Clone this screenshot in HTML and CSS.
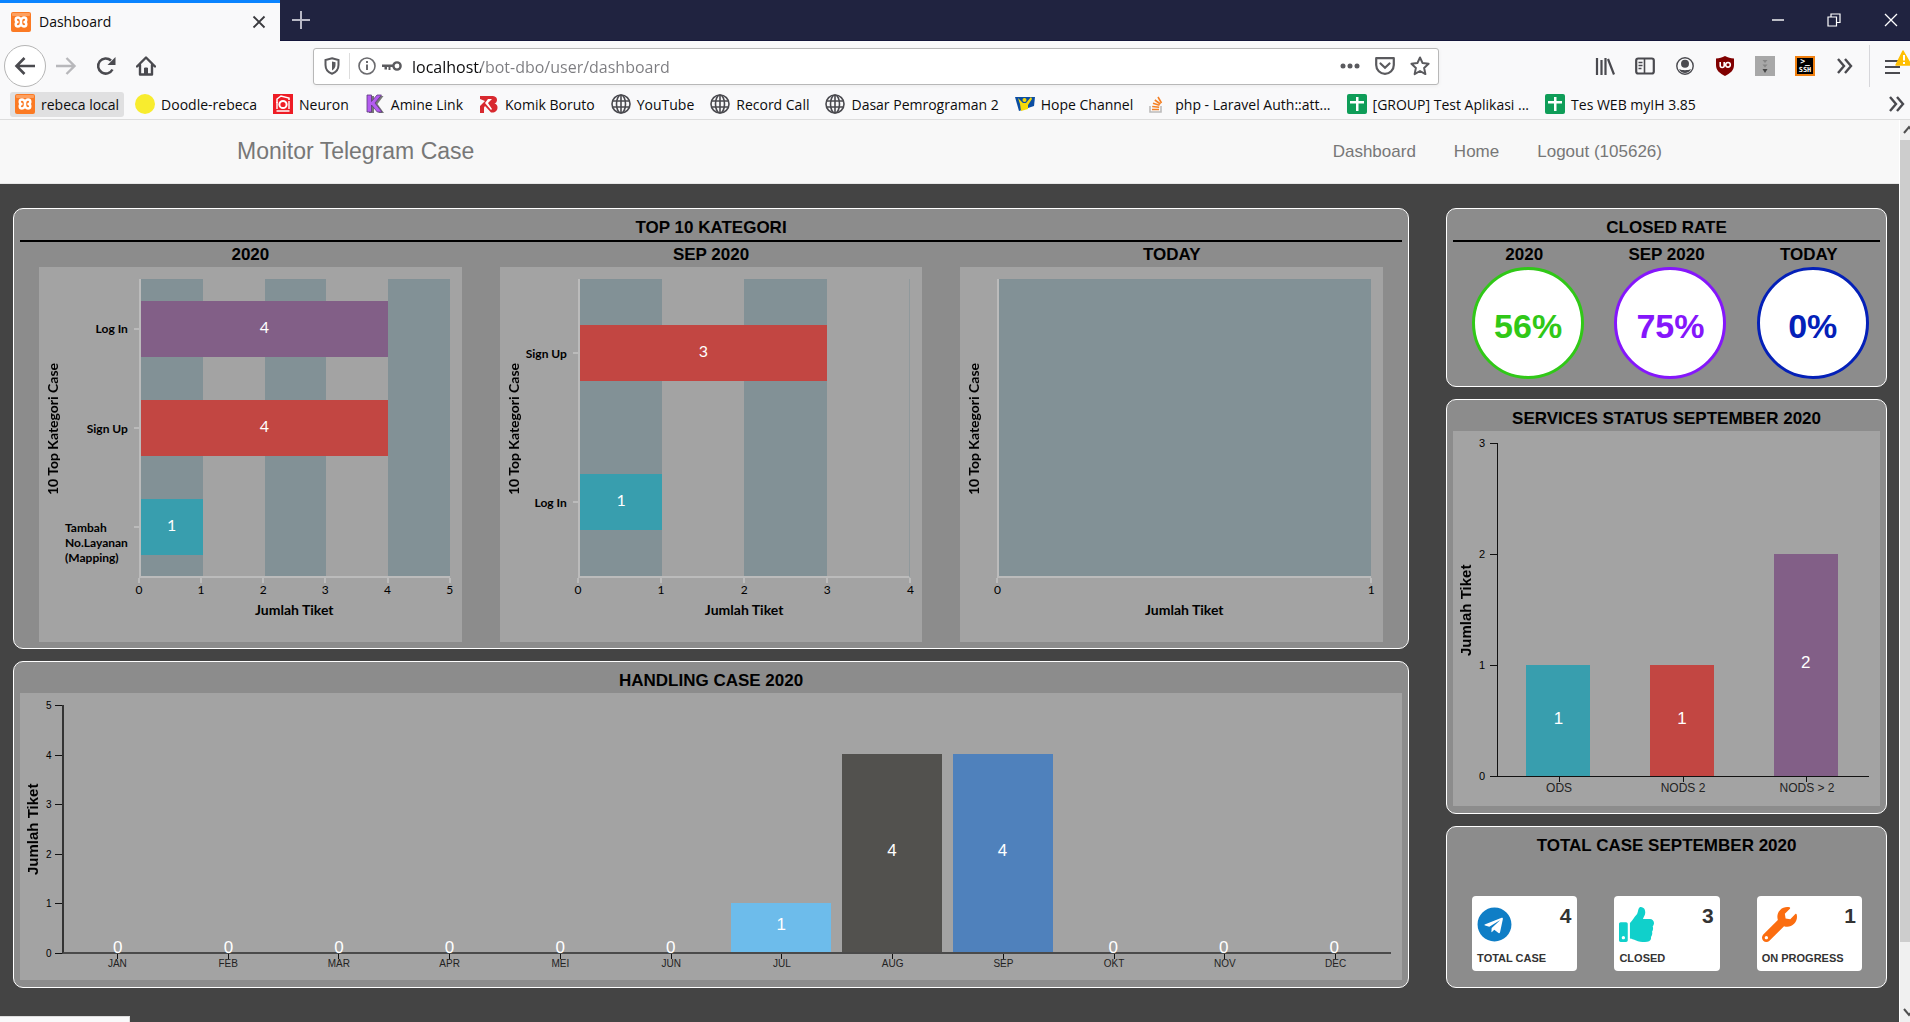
FILE: index.html
```html
<!DOCTYPE html>
<html lang="id">
<head>
<meta charset="utf-8">
<title>Dashboard</title>
<link rel="stylesheet" href="styles.css">
</head>
<body>
<svg class="sprite" aria-hidden="true">
  <symbol id="i-xampp" viewBox="0 0 20 20"><rect width="20" height="20" rx="2" fill="#fb7a24"/><rect x="1" y="1" width="18" height="3" rx="1" fill="#fda060"/><path d="M10 10C10 10 10 5.500 7 5.500S4 9.500 6.500 10C4 10.500 4 14.500 7 14.500S10 10 10 10 10 5.500 13 5.500 16 9.500 13.500 10C16 10.500 16 14.500 13 14.500S10 10 10 10" fill="none" stroke="#fff" stroke-width="2.400" stroke-linejoin="round"/></symbol>
  <symbol id="i-globe" viewBox="0 0 20 20"><g fill="none" stroke="#4a4a4f" stroke-width="1.600"><circle cx="10" cy="10" r="9"/><ellipse cx="10" cy="10" rx="4.500" ry="9"/><path d="M10 1v18M1.500 7h17M1.500 13h17"/></g></symbol>
  <symbol id="i-sheet" viewBox="0 0 20 20"><rect width="20" height="20" rx="2" fill="#0f9d58"/><path d="M9 3h2.500v4H17v2.500h-5.500V17H9V9.500H3V7h6z" fill="#fff"/></symbol>
  <symbol id="i-more" viewBox="0 0 18 18"><path d="M2 2l6 7-6 7M9 2l6 7-6 7" fill="none" stroke="#4a4a4f" stroke-width="2.400"/></symbol>
</svg>

<header class="browser">
  <div class="tabs">
    <div class="tab">
      <svg class="ico"><use href="#i-xampp"/></svg>
      <span class="tab-title">Dashboard</span>
      <button class="btn" aria-label="Close tab"><svg width="14" height="14" viewBox="0 0 14 14"><path d="M1.500 1.500l11 11m0-11l-11 11" stroke="#3a3a3e" stroke-width="1.800"/></svg></button>
    </div>
    <button class="btn new-tab" aria-label="New tab"><svg width="18" height="18" viewBox="0 0 18 18"><path d="M9 0v18M0 9h18" stroke="#b9b9c6" stroke-width="2"/></svg></button>
    <div class="window-buttons">
      <button class="btn" aria-label="Minimize"><svg width="14" height="14" viewBox="0 0 14 14"><path d="M1 7h12" stroke="#fff" stroke-width="1.400"/></svg></button>
      <button class="btn" aria-label="Restore"><svg width="14" height="14" viewBox="0 0 14 14"><path d="M1 4h8.500v9H1zM4 4V1h9v8.500H9.500" fill="none" stroke="#fff" stroke-width="1.200"/></svg></button>
      <button class="btn" aria-label="Close"><svg width="14" height="14" viewBox="0 0 14 14"><path d="M1 1l12 12M13 1L1 13" stroke="#fff" stroke-width="1.300"/></svg></button>
    </div>
  </div>

  <div class="toolbar">
    <div class="nav-buttons">
      <button class="btn back" aria-label="Back"><svg width="22" height="20" viewBox="0 0 22 20"><path d="M21 10H3M10.500 2l-8 8 8 8" fill="none" stroke="#4a4a4f" stroke-width="2.600"/></svg></button>
      <button class="btn" aria-label="Forward"><svg width="22" height="20" viewBox="0 0 22 20"><path d="M1 10h18M11.500 2l8 8-8 8" fill="none" stroke="#b8b8bb" stroke-width="2.400"/></svg></button>
      <button class="btn" aria-label="Reload"><svg width="20" height="20" viewBox="0 0 20 20"><path d="M16.500 13.500A7.600 7.600 0 1 1 15 4.500" fill="none" stroke="#4a4a4f" stroke-width="2.500"/><path d="M19.500 1v8h-8z" fill="#4a4a4f"/></svg></button>
      <button class="btn" aria-label="Home"><svg width="20" height="20" viewBox="0 0 20 20"><path d="M1 10.500L10 1.500l9 9M4 9v9.500h12V9" fill="none" stroke="#4a4a4f" stroke-width="2.400" stroke-linejoin="round" stroke-linecap="round"/><path d="M8.500 18v-6h3v6" fill="#4a4a4f" stroke="#4a4a4f"/></svg></button>
    </div>
    <div class="urlbar">
      <svg width="16" height="18" viewBox="0 0 16 18"><path d="M8 1.200L14.500 3v5c0 4.500-3 7.500-6.500 8.800C4.500 15.500 1.500 12.500 1.500 8V3z" fill="none" stroke="#5a5a5e" stroke-width="2"/><path d="M8 4.500v9c2-1.200 3.500-3 3.500-5.500V5.200z" fill="#5a5a5e"/></svg>
      <span class="url-sep"></span>
      <svg width="18" height="18" viewBox="0 0 18 18"><circle cx="9" cy="9" r="8" fill="none" stroke="#6a6a6e" stroke-width="1.600"/><path d="M9 7.500V13M9 4v2" stroke="#6a6a6e" stroke-width="2"/></svg>
      <svg class="key" width="20" height="10" viewBox="0 0 20 10"><circle cx="15" cy="5" r="3.600" fill="none" stroke="#5a5a5e" stroke-width="2.400"/><path d="M0 3.500h12V6H8.500v3h-2V6H5v2.500H2.500V6H0z" fill="#5a5a5e"/></svg>
      <input class="url" type="text" aria-label="Address" value="localhost/bot-dbo/user/dashboard">
      <button class="btn" aria-label="Page actions"><svg width="20" height="6" viewBox="0 0 20 6"><g fill="#5a5a5e"><circle cx="3" cy="3" r="2.500"/><circle cx="10" cy="3" r="2.500"/><circle cx="17" cy="3" r="2.500"/></g></svg></button>
      <button class="btn" aria-label="Save to Pocket"><svg width="20" height="18" viewBox="0 0 20 18"><path d="M1.200 1.200h17.600V8c0 5-4 8.800-8.800 8.800S1.200 13 1.200 8z" fill="none" stroke="#5a5a5e" stroke-width="2.200" stroke-linejoin="round"/><path d="M5.500 6.500L10 10.700l4.500-4.200" fill="none" stroke="#5a5a5e" stroke-width="2.200" stroke-linecap="round"/></svg></button>
      <button class="btn" aria-label="Bookmark"><svg width="20" height="20" viewBox="0 0 20 20"><path d="M10 1.500l2.600 5.600 6 .7-4.500 4.100 1.300 6.200L10 15l-5.400 3.100 1.300-6.200L1.400 7.800l6-.7z" fill="none" stroke="#5a5a5e" stroke-width="2" stroke-linejoin="round"/></svg></button>
    </div>
    <div class="extensions">
      <button class="btn" aria-label="Library"><svg width="20" height="18" viewBox="0 0 20 18"><path d="M2 1v17M6.500 3v15M10.500 1v17M13 2l6 15.500" stroke="#4a4a4f" stroke-width="2.200" fill="none"/></svg></button>
      <button class="btn" aria-label="Sidebars"><svg width="20" height="18" viewBox="0 0 20 18"><rect x="1.200" y="1.500" width="17.600" height="15" rx="2" fill="none" stroke="#4a4a4f" stroke-width="2.200"/><path d="M9.500 2v14" stroke="#4a4a4f" stroke-width="1.600"/><path d="M3.500 5.500h4M3.500 8.500h4M3.500 11.500h3" stroke="#4a4a4f" stroke-width="1.300"/></svg></button>
      <button class="btn" aria-label="Account"><svg width="18" height="18" viewBox="0 0 18 18"><circle cx="9" cy="9" r="8.200" fill="none" stroke="#4a4a4f" stroke-width="1.400"/><circle cx="9" cy="6.800" r="4" fill="#4a4a4f"/><path d="M3 12c3 1.600 9 1.600 12 0-1 2.500-3.500 4-6 4s-5-1.500-6-4z" fill="#4a4a4f"/></svg></button>
      <button class="btn" aria-label="uBlock"><svg width="18" height="20" viewBox="0 0 18 20"><path d="M9 0c3 1.800 5.500 2.300 9 2.500V9c0 5.500-4 8.500-9 11C4 17.500 0 14.500 0 9V2.500C3.500 2.300 6 1.800 9 0z" fill="#800000"/><path d="M4.200 6v3.500a2 2 0 0 0 4 0V6" fill="none" stroke="#fff" stroke-width="1.600"/><circle cx="12" cy="8.800" r="2.300" fill="none" stroke="#fff" stroke-width="1.600"/></svg></button>
      <button class="btn" aria-label="Downloads"><svg width="20" height="20" viewBox="0 0 20 20"><rect width="20" height="20" fill="#a8a8a8"/><path d="M7.500 4h5L10 7zM7.500 8.500h5L10 11.500z" fill="#858585"/><path d="M7.500 13h5L10 17z" fill="#444"/></svg></button>
      <button class="btn ssh" aria-label="SSH"><span>&gt;_</span><span class="ssh-name">SSH</span></button>
      <button class="btn" aria-label="More tools"><svg width="18" height="18"><use href="#i-more"/></svg></button>
    </div>
    <div class="menu">
      <button class="btn" aria-label="Menu"><svg width="26" height="32" viewBox="0 0 26 32"><path d="M1 11h14M1 17h15M1 23h15" stroke="#4a4a4f" stroke-width="2.200"/><path d="M19 1l8 14H12z" fill="#ffbf00" stroke="#ffbf00" stroke-width="1.500" stroke-linejoin="round"/><path d="M20 5v5.500M20 12v2" stroke="#fff" stroke-width="2"/></svg></button>
    </div>
  </div>

  <nav class="bookmarks" aria-label="Bookmarks">
    <a class="bookmark active" href="#"><svg class="ico"><use href="#i-xampp"/></svg>rebeca local</a>
    <a class="bookmark" href="#"><svg class="ico" viewBox="0 0 20 20"><circle cx="10" cy="10" r="10" fill="#f8ec2e"/></svg>Doodle-rebeca</a>
    <a class="bookmark" href="#"><svg class="ico" viewBox="0 0 20 20"><rect width="20" height="20" fill="#ee1c25"/><path d="M4 9V5l4-3 8 2v2" fill="none" stroke="#fff" stroke-width="1.500"/><circle cx="10" cy="10.500" r="3.600" fill="none" stroke="#fff" stroke-width="2"/><path d="M4 8v7M16 7v8M3.500 17h13" stroke="#fff" stroke-width="1.400"/></svg>Neuron</a>
    <a class="bookmark" href="#"><svg class="ico" viewBox="0 0 20 20"><path d="M4 2h5v6l5-6h4.500l-6 8 6.500 9h-5l-5-7v7H4z" fill="#777"/><path d="M2 1h4.500v6.500L12 1h4.500l-6.500 8 7 9h-4.700L6.500 11v7H2z" fill="#b45cf0" stroke="#5c3a78" stroke-width=".8"/></svg>Amine Link</a>
    <a class="bookmark" href="#"><svg class="ico" viewBox="0 0 20 20"><path d="M1 2h11c5 0 6 2 6 4 0 1.500-1 3-2.500 3.500 2 .5 3 2 3 4 0 3.500-2.500 5-5 5H12L6 12l-1 1.500V19H1v-7l5-5L1 5z" fill="#d8292f"/><path d="M9 5l-3 4 6 7 1-1-4-6 4-4z" fill="#fff"/></svg>Komik Boruto</a>
    <a class="bookmark" href="#"><svg class="ico"><use href="#i-globe"/></svg>YouTube</a>
    <a class="bookmark" href="#"><svg class="ico"><use href="#i-globe"/></svg>Record Call</a>
    <a class="bookmark" href="#"><svg class="ico"><use href="#i-globe"/></svg>Dasar Pemrograman 2</a>
    <a class="bookmark" href="#"><svg class="ico" viewBox="0 0 20 20"><path d="M0 3h20l-1 9-15 5z" fill="#0b4da2"/><path d="M3 4l5 5h3l5-6 1 2-4 6v4l-7 2-1-7z" fill="#f5d90a"/><circle cx="9.500" cy="6" r="2" fill="#f5d90a"/></svg>Hope Channel</a>
    <a class="bookmark" href="#"><svg class="ico" viewBox="0 0 20 20"><path d="M1 12v6h11v-6" fill="none" stroke="#bcbbbb" stroke-width="1.600"/><path d="M3 15.500h7M3.200 12.500l7 .8M4 9.300l6.500 2M5.800 6l5.600 4M9 3l3.500 6" stroke="#f48024" stroke-width="1.600"/></svg>php - Laravel Auth::att...</a>
    <a class="bookmark" href="#"><svg class="ico"><use href="#i-sheet"/></svg>[GROUP] Test Aplikasi ...</a>
    <a class="bookmark" href="#"><svg class="ico"><use href="#i-sheet"/></svg>Tes WEB myIH 3.85</a>
    <button class="btn overflow" aria-label="More bookmarks"><svg width="18" height="18"><use href="#i-more"/></svg></button>
  </nav>
</header>

<div class="viewport">
  <div class="page">
    <nav class="navbar">
      <div class="container">
        <a class="brand" href="#">Monitor Telegram Case</a>
        <div class="links"><a href="#">Dashboard</a><a href="#">Home</a><a href="#">Logout (105626)</a></div>
      </div>
    </nav>

    <main class="dashboard">
      <div class="column">
        <section class="card">
          <h2 class="title ruled">TOP 10 KATEGORI</h2>
          <div class="thirds">
            <div class="third">
              <h3 class="title sub">2020</h3>
              <div class="chart hchart">
                <div class="y-title">10 Top Kategori Case</div>
                <div class="cats"><div class="cat"><span>Log In</span></div><div class="cat"><span>Sign Up</span></div><div class="cat"><span>Tambah<br>No.Layanan<br>(Mapping)</span></div></div>
                <div class="plot" style="--max:5">
                  <div class="row"><div class="bar purple" style="width:80%">4</div></div>
                  <div class="row"><div class="bar red" style="width:80%">4</div></div>
                  <div class="row"><div class="bar teal" style="width:20%">1</div></div>
                </div>
                <div class="x-axis"><span>0</span><span>1</span><span>2</span><span>3</span><span>4</span><span>5</span></div>
                <div class="x-title">Jumlah Tiket</div>
              </div>
            </div>
            <div class="third">
              <h3 class="title sub">SEP 2020</h3>
              <div class="chart hchart">
                <div class="y-title">10 Top Kategori Case</div>
                <div class="cats"><div class="cat"><span>Sign Up</span></div><div class="cat"><span>Log In</span></div></div>
                <div class="plot even" style="--max:4">
                  <div class="row"><div class="bar red" style="width:75%">3</div></div>
                  <div class="row"><div class="bar teal" style="width:25%">1</div></div>
                </div>
                <div class="x-axis"><span>0</span><span>1</span><span>2</span><span>3</span><span>4</span></div>
                <div class="x-title">Jumlah Tiket</div>
              </div>
            </div>
            <div class="third">
              <h3 class="title sub">TODAY</h3>
              <div class="chart hchart">
                <div class="y-title">10 Top Kategori Case</div>
                <div class="cats"></div>
                <div class="plot" style="--max:1"></div>
                <div class="x-axis"><span>0</span><span>1</span></div>
                <div class="x-title">Jumlah Tiket</div>
              </div>
            </div>
          </div>
        </section>

        <section class="card">
          <h2 class="title">HANDLING CASE 2020</h2>
          <div class="chart vchart wide">
            <div class="y-title">Jumlah Tiket</div>
            <div class="y-axis"><span>5</span><span>4</span><span>3</span><span>2</span><span>1</span><span>0</span></div>
            <div class="plot">
              <div class="col"><div class="bar" style="height:0%">0</div></div>
              <div class="col"><div class="bar" style="height:0%">0</div></div>
              <div class="col"><div class="bar" style="height:0%">0</div></div>
              <div class="col"><div class="bar" style="height:0%">0</div></div>
              <div class="col"><div class="bar" style="height:0%">0</div></div>
              <div class="col"><div class="bar" style="height:0%">0</div></div>
              <div class="col"><div class="bar sky" style="height:20%">1</div></div>
              <div class="col"><div class="bar dark" style="height:80%">4</div></div>
              <div class="col"><div class="bar blue" style="height:80%">4</div></div>
              <div class="col"><div class="bar" style="height:0%">0</div></div>
              <div class="col"><div class="bar" style="height:0%">0</div></div>
              <div class="col"><div class="bar" style="height:0%">0</div></div>
            </div>
            <div class="x-axis"><span>JAN</span><span>FEB</span><span>MAR</span><span>APR</span><span>MEI</span><span>JUN</span><span>JUL</span><span>AUG</span><span>SEP</span><span>OKT</span><span>NOV</span><span>DEC</span></div>
          </div>
        </section>
      </div>

      <div class="column">
        <section class="card">
          <h2 class="title ruled">CLOSED RATE</h2>
          <div class="thirds">
            <div class="rate"><h3 class="title sub">2020</h3><div class="circle green">56%</div></div>
            <div class="rate"><h3 class="title sub">SEP 2020</h3><div class="circle violet">75%</div></div>
            <div class="rate"><h3 class="title sub">TODAY</h3><div class="circle navy">0%</div></div>
          </div>
        </section>

        <section class="card">
          <h2 class="title">SERVICES STATUS SEPTEMBER 2020</h2>
          <div class="chart vchart">
            <div class="y-title">Jumlah Tiket</div>
            <div class="y-axis"><span>3</span><span>2</span><span>1</span><span>0</span></div>
            <div class="plot">
              <div class="col"><div class="bar teal" style="height:33.333%">1</div></div>
              <div class="col"><div class="bar red" style="height:33.333%">1</div></div>
              <div class="col"><div class="bar purple" style="height:66.667%">2</div></div>
            </div>
            <div class="x-axis"><span>ODS</span><span>NODS 2</span><span>NODS &gt; 2</span></div>
          </div>
        </section>

        <section class="card totals">
          <h2 class="title">TOTAL CASE SEPTEMBER 2020</h2>
          <div class="thirds">
            <div class="stat-cell"><div class="stat">
              <svg width="35" height="35" viewBox="0 0 496 512"><path fill="#0f7ec6" d="M248 8C111 8 0 119 0 256s111 248 248 248 248-111 248-248S385 8 248 8zm121.800 169.900l-40.700 191.800c-3 13.600-11.100 16.900-22.400 10.500l-62-45.700-29.900 28.800c-3.300 3.300-6.100 6.100-12.500 6.100l4.400-63.100 114.900-103.800c5-4.400-1.100-6.900-7.700-2.500l-142 89.400-61.200-19.100c-13.300-4.200-13.600-13.300 2.800-19.700l239.100-92.200c11.100-4 20.800 2.700 17.200 19.500z"/></svg>
              <strong>4</strong><span>TOTAL CASE</span></div></div>
            <div class="stat-cell"><div class="stat">
              <svg width="35" height="35" viewBox="0 0 512 512"><path fill="#10d0cb" d="M104 224H24c-13.255 0-24 10.745-24 24v240c0 13.255 10.745 24 24 24h80c13.255 0 24-10.745 24-24V248c0-13.255-10.745-24-24-24zM64 472c-13.255 0-24-10.745-24-24s10.745-24 24-24 24 10.745 24 24-10.745 24-24 24zM384 81.452c0 42.416-25.970 66.208-33.277 94.548h101.723c33.397 0 59.397 27.746 59.553 58.098.084 17.938-7.546 37.249-19.439 49.197l-.11.11c9.836 23.337 8.237 56.037-9.308 79.469 8.681 25.895-.069 57.704-16.382 74.757 4.298 17.598 2.244 32.575-6.148 44.632C440.202 511.587 389.616 512 346.839 512l-2.845-.001c-48.287-.017-87.806-17.598-119.560-31.725-15.957-7.099-36.821-15.887-52.651-16.178-6.540-.12-11.783-5.457-11.783-11.998v-213.770c0-3.200 1.282-6.271 3.558-8.521 39.614-39.144 56.648-80.587 89.117-113.111 14.804-14.832 20.188-37.236 25.393-58.902C282.515 39.293 291.817 0 312 0c24 0 72 8 72 81.452z"/></svg>
              <strong>3</strong><span>CLOSED</span></div></div>
            <div class="stat-cell"><div class="stat">
              <svg width="35" height="35" viewBox="0 0 512 512"><path fill="#fb6d10" d="M507.730 109.100c-2.240-9.030-13.540-12.090-20.120-5.510l-74.360 74.360-67.880-11.310-11.310-67.880 74.360-74.360c6.620-6.620 3.430-17.900-5.660-20.160-47.380-11.740-99.550.91-136.580 37.930-39.640 39.640-50.550 97.100-34.050 147.200L18.740 402.760c-24.990 24.990-24.990 65.510 0 90.500 24.990 24.990 65.510 24.990 90.500 0l213.210-213.210c50.120 16.710 107.470 5.680 147.370-34.220 37.070-37.070 49.700-89.320 37.910-136.730zM64 472c-13.250 0-24-10.750-24-24 0-13.260 10.750-24 24-24s24 10.740 24 24c0 13.250-10.750 24-24 24z"/></svg>
              <strong>1</strong><span>ON PROGRESS</span></div></div>
          </div>
        </section>
      </div>
    </main>
    <div class="status"></div>
  </div>

  <div class="scrollbar" aria-hidden="true">
    <svg class="arrow" viewBox="0 0 16 20"><path d="M4 13l5-6 5 6" fill="none" stroke="#505050" stroke-width="2"/></svg>
    <div class="thumb"></div>
    <div class="track"></div>
    <svg class="arrow" viewBox="0 0 16 20"><path d="M4 7l5 6 5-6" fill="none" stroke="#505050" stroke-width="2"/></svg>
  </div>
</div>
</body>
</html>
```
FILE: styles.css
```css
* { box-sizing: border-box; }

body {
  margin: 0;
  min-height: 100vh;
  display: flex;
  flex-direction: column;
  overflow-x: hidden;
  background: #444;
  font-family: "Liberation Sans", Arial, sans-serif;
}

h2, h3 { margin: 0; }
a { color: inherit; text-decoration: none; }
svg { display: block; flex: none; }
.sprite { position: absolute; width: 0; height: 0; }
.ico { width: 20px; height: 20px; }

.btn {
  display: flex;
  align-items: center;
  justify-content: center;
  flex: none;
  padding: 0;
  border: 0;
  background: none;
}

/* Browser window */
.browser {
  background: #f9f9fa;
  border-bottom: 1px solid #ddd;
  font-family: "Open Sans", "Noto Sans", sans-serif;
  color: #0c0c0d;
}

.tabs { display: flex; height: 41px; background: #202340; border-bottom: 1px solid #14163a; }
.tab {
  display: flex;
  align-items: center;
  width: 280px;
  height: 41px;
  padding: 0 14px 0 11px;
  border-top: 3px solid #0a84ff;
  background: #f9f9fa;
}
.tab-title { flex: 1; margin-left: 8px; font-size: 14px; line-height: 20px; }
.new-tab { width: 42px; }
.window-buttons { display: flex; margin-left: auto; }
.window-buttons .btn { width: 56px; }
.window-buttons .btn:last-child { width: 38px; margin-left: 10px; }

.toolbar { display: flex; align-items: center; height: 50px; }
.nav-buttons { display: flex; align-items: center; margin-right: 147px; padding-left: 4px; }
.nav-buttons .btn { width: 40px; height: 42px; }
.nav-buttons .back { width: 42px; border: 1px solid #b5b5b5; border-radius: 50%; background: #fff; }

.urlbar {
  display: flex;
  align-items: center;
  flex: 1;
  height: 37px;
  padding: 0 8px 0 10px;
  border: 1px solid #b8b8b8;
  border-radius: 3px;
  background: #fff;
  box-shadow: 0 1px 4px rgba(0, 0, 0, .06);
}
.url-sep { width: 1px; height: 26px; margin: 0 8px 0 9px; background: #ddd; }
.key { margin: 0 10px 0 6px; }
.url {
  flex: 1;
  min-width: 0;
  padding: 2px 0 0;
  border: 0;
  outline: 0;
  font: 16px/24px "Open Sans", "Noto Sans", sans-serif;
  color: transparent;
  background: linear-gradient(90deg, #0c0c0d 69px, #7c7c80 69px);
  background-clip: text;
  -webkit-background-clip: text;
}
.urlbar .btn { margin-left: 15px; }

.extensions { display: flex; align-items: center; margin-left: 146px; }
.extensions .btn { width: 40px; height: 40px; }
.extensions .ssh {
  flex-direction: column;
  width: 20px;
  height: 20px;
  margin: 0 10px;
  border: 2px solid #f08010;
  background: #000;
  color: #fff;
  font: bold 8px/8px "DejaVu Sans Mono", monospace;
}
.ssh-name { font-size: 7px; line-height: 8px; }
.menu { display: flex; align-items: center; height: 42px; margin-left: 4px; padding-left: 14px; border-left: 1px solid #d7d7db; }

.bookmarks { display: flex; align-items: center; height: 26px; padding-left: 10px; margin-bottom: 2px; }
.bookmark {
  display: flex;
  align-items: center;
  gap: 6px;
  height: 25px;
  padding: 0 5px;
  margin-right: 6px;
  border-radius: 3px;
  font-size: 14px;
  white-space: nowrap;
}
.bookmark.active { background: #e0e0e1; }
.overflow { margin: 0 4px 0 auto; }

/* Page and its scroll bar */
.viewport { display: flex; flex: 1; }
.page { position: relative; flex: 1; min-width: 0; }
.scrollbar { display: flex; flex-direction: column; width: 11px; overflow: hidden; background: #f0f0f0; border-left: 1px solid #fff; }
.arrow { width: 16px; height: 20px; }
.thumb { flex: 40; background: #cdcdcd; }
.track { flex: 3; }
.status {
  position: absolute;
  left: 0;
  bottom: 0;
  width: 130px;
  height: 6px;
  border-top: 1px solid #ddd;
  border-right: 1px solid #ddd;
  background: #f9f9fa;
}

.navbar { background: #f8f8f8; border-bottom: 1px solid #e7e7e7; color: #777; }
.container { display: flex; align-items: center; justify-content: space-between; max-width: 1463px; height: 63px; margin: 0 auto; padding: 0 19px; }
.brand { font-size: 23px; }
.links { display: flex; gap: 38px; font-size: 17px; }

/* Dashboard */
.dashboard {
  display: grid;
  grid-template-columns: minmax(0, 19fr) minmax(0, 6fr);
  gap: 37px;
  padding: 24px 12px 32px 13px;
}
.column { display: flex; flex-direction: column; gap: 12px; }
.card { padding: 6px; border: 1px solid #fff; border-radius: 10px; background: #8c8c8c; color: #000; }
.column > .card:nth-child(2) { padding-bottom: 7px; }
.column > .card:last-child { flex: 1; }
.title { height: 25px; font-size: 17px; font-weight: bold; line-height: 25px; text-align: center; }
.ruled { height: 27px; border-bottom: 2px solid #000; }
.thirds { display: grid; grid-template-columns: repeat(3, minmax(0, 1fr)); }
.third { padding: 0 19px; }

/* Charts */
.chart { display: grid; background: #a3a3a3; }
.y-title { display: flex; justify-content: center; writing-mode: vertical-rl; transform: rotate(180deg); font-weight: bold; white-space: nowrap; }
.bar { display: flex; align-items: center; justify-content: center; padding-bottom: 5px; color: #fff; }
.teal { background: #389eae; }
.red { background: #c24642; }
.purple { background: #825f87; }
.sky { background: #6dbceb; }
.dark { background: #52514e; }
.blue { background: #4f81bc; }

.hchart {
  grid-template-columns: 26px auto minmax(0, 1fr);
  grid-template-rows: 299px 22px 20px;
  height: 375px;
  padding: 12px 12px 0 0;
  font-family: Lato, "Open Sans", sans-serif;
}
.hchart .y-title { padding-right: 4px; font-size: 14px; line-height: 20px; }
.cats { display: flex; flex-direction: column; margin-right: 5px; }
.hchart .cats { padding-right: 6px; }
.cat { display: flex; flex: 1; flex-direction: column; justify-content: center; align-items: flex-end; }
.cat span { height: 16px; font-size: 12px; font-weight: bold; line-height: 15px; }
.hchart .plot {
  --step: calc(100% / var(--max));
  display: flex;
  flex-direction: column;
  border-left: 2px solid #bbb;
  border-bottom: 2px solid #bbb;
  background: repeating-linear-gradient(90deg, #829196 0 var(--step), #a3a3a3 var(--step) calc(2 * var(--step)));
}
.hchart .even { border-right: 1px solid #90999c; }
.row { display: flex; flex: 1; align-items: center; position: relative; }
.row::before { content: ""; position: absolute; left: -7px; width: 5px; height: 2px; background: #bbb; }
.hchart .bar { height: 56px; font-size: 16px; }
.hchart .x-axis { grid-column: 3; display: flex; justify-content: space-between; }
.x-axis span { display: flex; flex-direction: column; align-items: center; width: 0; white-space: nowrap; }
.hchart .x-axis span { font-size: 12px; line-height: 13px; }
.hchart .x-axis span::before { content: ""; width: 2px; height: 5px; background: #bbb; }
.x-title { grid-column: 3; font-size: 14px; font-weight: bold; line-height: 20px; text-align: center; }

.vchart {
  grid-template-columns: 26px 11px 7px minmax(0, 1fr);
  grid-template-rows: 334px 20px;
  height: 375px;
  padding: 12px 11px 0 0;
}
.vchart.wide { grid-template-columns: 26px 9px 7px minmax(0, 1fr); grid-template-rows: 249px 20px; height: 287px; }
.vchart .y-title { font-size: 15px; line-height: 26px; }
.y-axis { display: flex; grid-column: 2 / 4; flex-direction: column; justify-content: space-between; }
.y-axis span { display: flex; align-items: center; justify-content: space-between; height: 1px; font-size: 11px; line-height: 11px; }
.y-axis span::after { content: ""; width: 7px; height: 1px; background: #111; }
.wide .y-axis span { font-size: 10px; }
.vchart .plot { display: flex; grid-column: 4; border-left: 1px solid #111; border-bottom: 1px solid #111; }
.vchart.wide .plot { border-left: 2px solid #333; border-bottom: 2px solid #4a4a4a; }
.col { display: flex; flex: 1; align-items: flex-end; justify-content: center; padding-right: 3px; }
.vchart .bar { width: 53%; padding-bottom: 4px; font-size: 17px; line-height: 18px; }
.vchart.wide .bar { width: 93%; }
.vchart .x-axis { display: flex; grid-column: 4; justify-content: space-around; }
.vchart .x-axis span { font-size: 12px; line-height: 12px; color: #222; }
.vchart .x-axis span::before { content: ""; width: 1px; height: 5px; background: #111; }
.vchart.wide .x-axis span { font-size: 10px; line-height: 10px; }

/* Closed rate */
.circle {
  display: flex;
  align-items: center;
  justify-content: center;
  width: 112px;
  height: 112px;
  margin: 0 0 1px 19px;
  padding-top: 7px;
  border: 3px solid;
  border-radius: 50%;
  background: #fff;
  font-size: 34px;
  font-weight: bold;
}
.green { color: #30c817; }
.violet { color: #8516fb; }
.navy { color: #0420b8; }

/* Totals */
.totals .thirds { padding-top: 38px; }
.stat-cell { padding: 0 18px 0 19px; }
.stat {
  display: grid;
  grid-template-columns: 35px 1fr;
  grid-template-rows: 35px 16px;
  row-gap: 8px;
  height: 75px;
  padding: 11px 6px 5px 5px;
  border-radius: 4px;
  background: #fff;
  color: #333;
}
.stat strong { font-size: 21px; line-height: 18px; text-align: right; }
.stat span { grid-column: 1 / 3; font-size: 11px; font-weight: bold; line-height: 16px; white-space: nowrap; }
```
